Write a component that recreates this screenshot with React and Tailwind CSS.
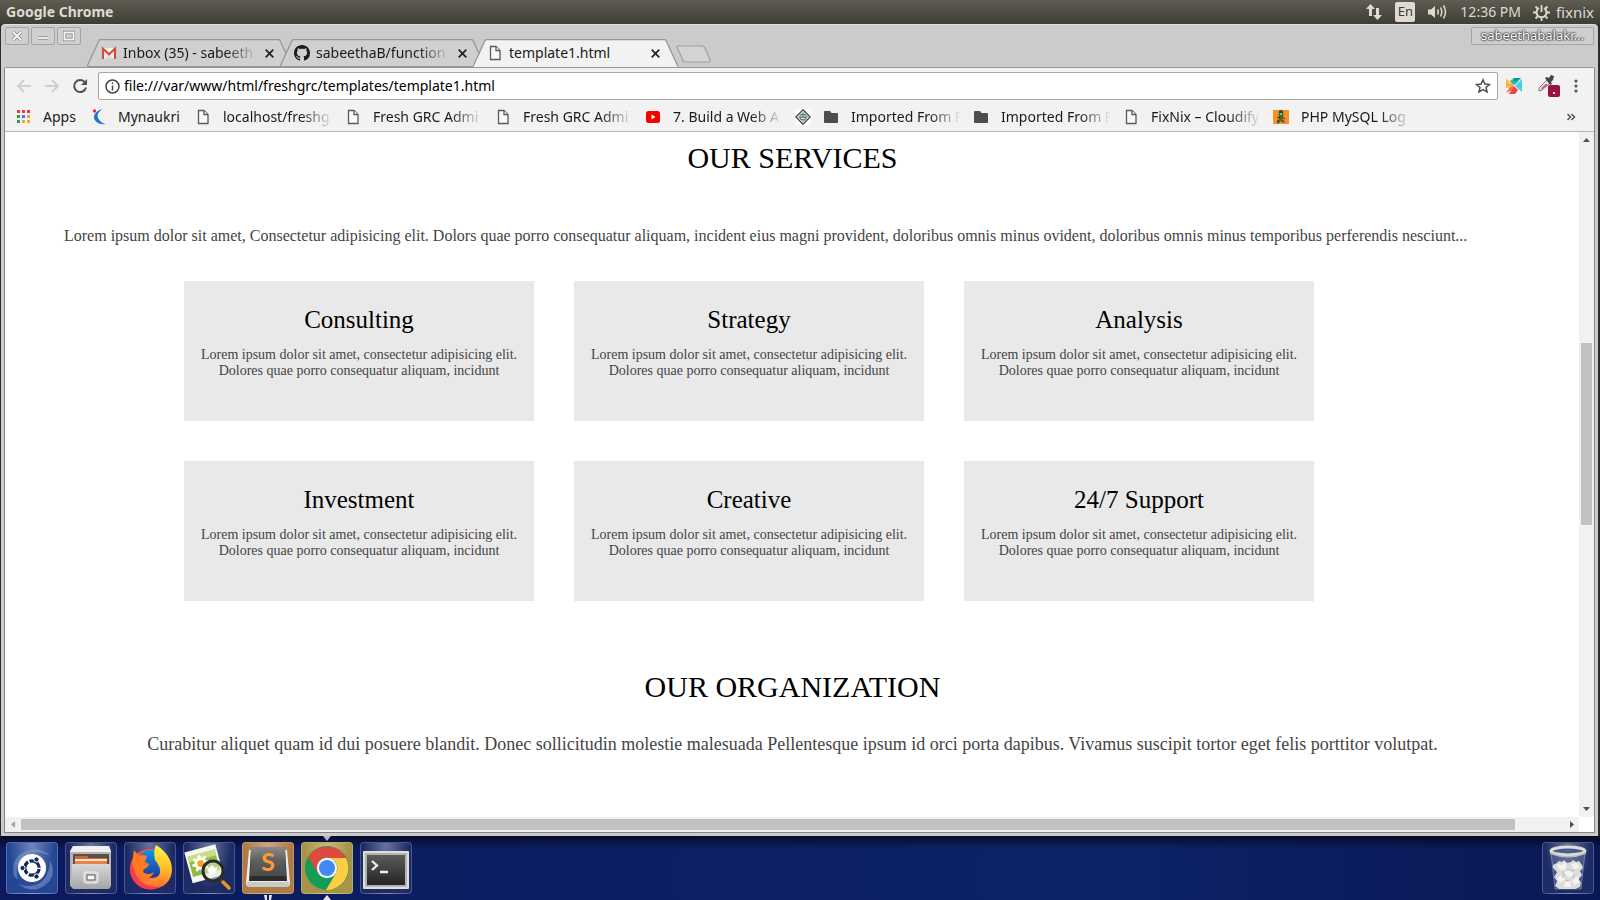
const UI = "font-['Noto_Sans','Open_Sans',sans-serif]";

function TabShape({ active }) {
  return (
    <svg className="absolute inset-0 h-full w-full" viewBox="0 0 205 28" preserveAspectRatio="none" aria-hidden="true">
      <path d="M0 28 L12 1.500 Q12.500 .5 14 .5 H191 Q192.500 .5 193 1.500 L205 28 Z" fill={active ? "#f2f2f2" : "#d0d0d0"} />
      <path d="M0 27.500 L12 1.500 Q12.500 .5 14 .5 H191 Q192.500 .5 193 1.500 L205 27.500" fill="none" stroke="#979797" strokeWidth="1.300" />
      {!active && <path d="M0 27.500H205" stroke="#979797" />}
    </svg>
  );
}

function PageIcon() {
  return (
    <svg width="16" height="16" viewBox="0 0 16 16" fill="#fafafa" stroke="#5a5a5a" strokeWidth="1.300" aria-hidden="true">
      <path d="M3.500 1.500H9L13 5.500V14.500H3.500Z" />
      <path d="M9 1.500V5.500H13" />
    </svg>
  );
}

function FolderIcon() {
  return (
    <svg width="16" height="16" viewBox="0 0 16 16" fill="#4d4d4d" aria-hidden="true">
      <path d="M2 2H7L8.500 4H14Q15 4 15 5V13Q15 14 14 14H2Q1 14 1 13V3Q1 2 2 2Z" />
    </svg>
  );
}

function GmailIcon() {
  return (
    <svg width="16" height="16" viewBox="0 0 16 16" aria-hidden="true">
      <path d="M1.500 3H14.500V14H1.500Z" fill="#f3f1f0" />
      <path d="M3 14 8 9.500 13 14Z" fill="#dedcdb" />
      <path d="M2 14V3.800L8 9.300 14 3.800V14" fill="none" stroke="#d54b3d" strokeWidth="2.200" />
    </svg>
  );
}

function GithubIcon() {
  return (
    <svg width="16" height="16" viewBox="0 0 16 16" fill="#1b1b1b" aria-hidden="true">
      <path d="M8 0C3.580 0 0 3.580 0 8c0 3.540 2.290 6.530 5.470 7.590.4.070.55-.17.55-.38 0-.19-.01-.82-.01-1.490-2.010.37-2.530-.49-2.690-.94-.09-.23-.48-.94-.82-1.130-.28-.15-.68-.52-.01-.53.63-.01 1.080.58 1.230.82.72 1.210 1.870.87 2.330.66.070-.52.28-.87.51-1.070-1.780-.2-3.640-.89-3.640-3.950 0-.87.31-1.590.82-2.150-.08-.2-.36-1.020.08-2.120 0 0 .67-.21 2.200.82.64-.18 1.320-.27 2-.27s1.360.09 2 .27c1.530-1.040 2.200-.82 2.200-.82.44 1.100.16 1.920.08 2.120.51.56.82 1.270.82 2.150 0 3.070-1.870 3.750-3.650 3.950.29.25.54.73.54 1.480 0 1.070-.01 1.930-.01 2.200 0 .21.15.46.55.38A8.010 8.010 0 0 0 16 8c0-4.420-3.580-8-8-8z" />
    </svg>
  );
}

function AppsIcon() {
  const colors = ["#f0363a", "#f0363a", "#f0363a", "#2ba24c", "#2f86f4", "#fba51c", "#2ba24c", "#fba51c", "#fba51c"];
  return (
    <svg width="16" height="16" viewBox="0 0 16 16" aria-hidden="true">
      {colors.map((c, i) => (
        <rect key={i} x={2 + (i % 3) * 5} y={1 + Math.floor(i / 3) * 5} width="3" height="3" fill={c} />
      ))}
    </svg>
  );
}

function NaukriIcon() {
  return (
    <svg width="16" height="16" viewBox="0 0 16 16" aria-hidden="true">
      <path d="M12.500 .5C5.500 3.500 5.500 11 15.500 15.500 7 15.500 3.500 11 4 7.500 4.500 4 7.500 1 12.500 .5Z" fill="#1b77c5" />
      <circle cx="4.500" cy="2" r="1.700" fill="#ee2233" />
    </svg>
  );
}

function YoutubeIcon() {
  return (
    <svg width="16" height="16" viewBox="0 0 16 16" aria-hidden="true">
      <rect x="1" y="2" width="14" height="12" rx="2.500" fill="#f80000" />
      <path d="M6.500 5.500 10.500 8 6.500 10.500Z" fill="#fff" />
    </svg>
  );
}

function DiamondIcon() {
  return (
    <svg width="16" height="16" viewBox="0 0 16 16" aria-hidden="true">
      <rect width="16" height="16" fill="#fcfcfc" />
      <path d="M8 .8 15.200 8 8 15.200.8 8Z" fill="#eee" stroke="#444" strokeWidth="1.300" />
      <path d="M8 3.500 12.500 8 8 12.500 3.500 8Z" fill="none" stroke="#666" strokeDasharray="1.500 1" />
      <circle cx="8" cy="8" r="3.500" fill="#5f8a72" />
      <path d="M5.500 7H7.500M8.500 7H10.500M6 9.500H10" stroke="#e3eee6" />
    </svg>
  );
}

function PhpIcon() {
  return (
    <svg width="16" height="16" viewBox="0 0 16 16" aria-hidden="true">
      <rect y="1" width="16" height="14" fill="#fb902b" />
      <path d="M6 2Q8-.5 10 2L10.500 6 9.500 10 12 13 10 14 8 12 5 15 3.500 13 6 10 5.500 6Z" fill="#496b31" />
      <path d="M6 3H10M4 9 7 8M9 8 12 10M4 12H6" stroke="#252d16" />
      <circle cx="8" cy="5" r="1" fill="#b2d276" />
    </svg>
  );
}

const bookmarks = [
  { label: "Apps", icon: AppsIcon, width: "w-[35px]" },
  { label: "Mynaukri", icon: NaukriIcon, width: "w-[65px]" },
  { label: "localhost/freshg", icon: PageIcon },
  { label: "Fresh GRC Admi", icon: PageIcon },
  { label: "Fresh GRC Admi", icon: PageIcon },
  { label: "7. Build a Web A", icon: YoutubeIcon },
  { label: "", icon: DiamondIcon },
  { label: "Imported From F", icon: FolderIcon },
  { label: "Imported From F", icon: FolderIcon },
  { label: "FixNix – Cloudify", icon: PageIcon },
  { label: "PHP MySQL Log", icon: PhpIcon },
];

const tabs = [
  { label: "Inbox (35) - sabeeth", icon: GmailIcon },
  { label: "sabeethaB/function", icon: GithubIcon },
  { label: "template1.html", icon: PageIcon, active: true },
];

const services = ["Consulting", "Strategy", "Analysis", "Investment", "Creative", "24/7 Support"];

const FADE = "[mask-image:linear-gradient(to_right,black_calc(100%-32px),transparent)]";

function Panel() {
  return (
    <header className="flex h-6 shrink-0 items-center bg-linear-to-b from-[#5f5c50] to-[#3d3c37] px-1.5 text-[15px] text-[#dfdbd2]">
      <span className="flex-1 text-sm font-bold">Google Chrome</span>
      <div className="flex items-center">
        <svg className="mr-3" width="18" height="18" viewBox="0 0 18 18" fill="#dfdbd2" aria-label="Network">
          <path d="M5.500 1 10 6H7V13H4V6H1ZM12.500 17 8 12H11V5H14V12H17Z" />
        </svg>
        <span className="mr-3 flex h-5 w-5 items-center justify-center rounded-xs bg-[#dfdbd2] text-[13px] text-[#3d3c37]">En</span>
        <svg className="mr-3" width="21" height="18" viewBox="0 0 21 18" fill="none" stroke="#dfdbd2" strokeWidth="1.500" aria-label="Volume">
          <path d="M1 6.500H4L8 3V15L4 11.500H1Z" fill="#dfdbd2" stroke="none" />
          <path d="M10.500 6.500Q12 9 10.500 11.500M13.500 4.500Q16 9 13.500 13.500M16.500 2.500Q20.500 9 16.500 15.500" />
        </svg>
        <span className="mr-3 text-sm">12:36 PM</span>
        <svg className="mr-1.5" width="17" height="17" viewBox="0 0 17 17" fill="none" stroke="#dfdbd2" aria-label="Session">
          <path d="M6 4A5 5 0 1 0 11 4" strokeWidth="2" />
          <path d="M8.500 1V8M8.500 14V17M0 8.500H3M14 8.500H17M2.500 2.500 4.500 4.500M14.500 2.500 12.500 4.500M2.500 14.500 4.500 12.500M14.500 14.500 12.500 12.500" strokeWidth="1.800" />
        </svg>
        <span>fixnix</span>
      </div>
    </header>
  );
}

function WindowButton({ label, children }) {
  return (
    <button aria-label={label} className="flex h-[18px] w-6 items-center justify-center rounded-xs border border-[#a5a5a5] bg-[#cfcfcf]">
      <svg width="12" height="12" viewBox="0 0 12 12" fill="none" aria-hidden="true">
        <g stroke="#8c8c8c" strokeWidth="3.500">{children}</g>
        <g stroke="#f4f4f4" strokeWidth="1.800">{children}</g>
      </svg>
    </button>
  );
}

function TabStrip() {
  return (
    <div className="flex h-[43px] shrink-0 items-start justify-between border-t border-[#dedede] bg-[#cbcbcb]">
      <div className="flex items-end">
        <div className="flex gap-0.5 self-start pt-0.5">
          <WindowButton label="Close"><path d="M2 2 10 10M10 2 2 10" /></WindowButton>
          <WindowButton label="Minimize"><path d="M1 8H11" /></WindowButton>
          <WindowButton label="Maximize"><rect x="1.500" y="2.500" width="9" height="7" /></WindowButton>
        </div>
        <div className="ml-1.5 flex pt-[14px]" role="tablist">
          {tabs.map(({ label, icon: Icon, active }) => (
            <div key={label} className={`relative -mr-3 flex h-7 w-[205px] items-center pr-4 pl-[14px] ${active ? "z-10" : ""}`}>
              <TabShape active={active} />
              <div className="relative flex min-w-0 flex-1 items-center">
                <Icon />
                <button role="tab" aria-selected={!!active} className={`ml-1.5 min-w-0 flex-1 overflow-hidden text-left text-sm whitespace-nowrap text-[#1a1a1a] ${active ? "" : FADE}`}>{label}</button>
                <button aria-label={`Close ${label}`} className="ml-1.5 p-0.5">
                  <svg width="9" height="9" viewBox="0 0 9 9" stroke="#222" strokeWidth="1.700" aria-hidden="true"><path d="M.7.7 8.300 8.300M8.300.7.7 8.300" /></svg>
                </button>
              </div>
            </div>
          ))}
        </div>
        <button aria-label="New tab" className="mb-1 ml-2.5">
          <svg width="36" height="18" viewBox="0 0 36 18" aria-hidden="true">
            <path d="M2 1H26Q28 1 29 3L34 15Q34.500 17 33 17H9Q7.500 17 7 15.500L1.200 2.500Q1 1 2 1Z" fill="#d3d3d3" stroke="#a0a0a0" strokeWidth="1.200" />
          </svg>
        </button>
      </div>
      <button className="mt-0.5 flex h-[18px] w-[123px] items-center justify-center rounded-xs border border-[#a5a5a5] bg-[#cfcfcf] text-[13px] text-white [text-shadow:0_0_2px_#222,0_0_2px_#222,0_0_1px_#333]">
        sabeethabalakr...
      </button>
    </div>
  );
}

function Toolbar() {
  return (
    <div className="flex h-[33px] shrink-0 items-center border-t border-[#979797] bg-[#f2f2f2] pt-1">
      <button aria-label="Back" className="ml-2.5">
        <svg width="17" height="16" viewBox="0 0 17 16" fill="none" stroke="#cfcfcf" strokeWidth="2" aria-hidden="true"><path d="M16 8H3M9 2 3 8 9 14" /></svg>
      </button>
      <button aria-label="Forward" className="ml-3">
        <svg width="17" height="16" viewBox="0 0 17 16" fill="none" stroke="#cfcfcf" strokeWidth="2" aria-hidden="true"><path d="M1 8H14M8 2 14 8 8 14" /></svg>
      </button>
      <button aria-label="Reload" className="ml-[11px]">
        <svg width="16" height="16" viewBox="0 0 16 16" fill="none" aria-hidden="true">
          <path d="M13 4.500A6 6 0 1 0 14 9.500" stroke="#505050" strokeWidth="2" />
          <path d="M15 1V7H9Z" fill="#505050" />
        </svg>
      </button>
      <label className="ml-2.5 flex h-7 min-w-0 flex-1 items-center rounded-xs border border-[#a6a6a6] bg-white px-1.5">
        <svg width="15" height="15" viewBox="0 0 15 15" fill="none" stroke="#444" strokeWidth="1.500" aria-hidden="true">
          <circle cx="7.500" cy="7.500" r="6.500" /><path d="M7.500 6.500V11.500M7.500 3.500V5" />
        </svg>
        <input aria-label="Address" defaultValue="file:///var/www/html/freshgrc/templates/template1.html" className="ml-1 min-w-0 flex-1 bg-transparent text-sm text-black outline-none" />
        <svg width="16" height="16" viewBox="0 0 16 16" fill="none" stroke="#505050" strokeWidth="1.500" aria-hidden="true">
          <path d="M8 1.800 9.900 6.100 14.500 6.500 11 9.500 12.100 14 8 11.600 3.900 14 5 9.500 1.500 6.500 6.100 6.100Z" />
        </svg>
      </label>
      <button aria-label="Extension" className="ml-2">
        <svg width="16" height="16" viewBox="0 0 16 16" aria-hidden="true">
          <path d="M0 1 7 5 8 8 0 10Z" fill="#fcae45" />
          <path d="M0 1 7 5 3 6Z" fill="#ffd34f" />
          <path d="M4 3 8 0H15L11 5 8 7Z" fill="#1fbab5" />
          <path d="M8 0H15L8 4Z" fill="#11908f" />
          <path d="M16 1V14L9 8 12 5Z" fill="#4bd1e4" />
          <path d="M8 8 12 12 9 16H3L6 11Z" fill="#ee4549" />
          <path d="M0 15 4 9 8 8 6 12Z" fill="#f46a4e" />
        </svg>
      </button>
      <button aria-label="Color picker" className="ml-4">
        <svg width="22" height="22" viewBox="0 0 22 22" aria-hidden="true">
          <path d="M1 13 9 5 12 8 4 15 1 16Z" fill="#eee" stroke="#777" />
          <path d="M3 13 8 8.500 10 10 4 14.500Z" fill="#e35a90" />
          <path d="M7 3 9 2 11 3 13 0 16 1 15 5 13 7 14 9 12 10Z" fill="#444" />
          <rect x="10" y="10" width="12" height="12" rx="2" fill="#99123f" />
          <rect x="15" y="17" width="2" height="2" fill="#f5d8e0" />
        </svg>
      </button>
      <button aria-label="Menu" className="mr-4 ml-3.5">
        <svg width="4" height="14" viewBox="0 0 4 14" fill="#555" aria-hidden="true"><circle cx="2" cy="2" r="1.600" /><circle cx="2" cy="7" r="1.600" /><circle cx="2" cy="12" r="1.600" /></svg>
      </button>
    </div>
  );
}

function Bookmarks() {
  return (
    <nav className="flex h-8 shrink-0 items-center gap-3 overflow-hidden border-b border-[#b6b6b6] bg-[#f2f2f2] pt-0.5 pr-[18px] pl-2.5 text-sm text-[#1a1a1a]">
      {bookmarks.map(({ label, icon: Icon, width }, i) => (
        <a key={i} href="#" className="flex shrink-0 items-center gap-3" aria-label={label || "Bookmark"}>
          <Icon />
          {label && <span className={`whitespace-nowrap ${width || `w-[110px] overflow-hidden ${FADE}`}`}>{label}</span>}
        </a>
      ))}
      <button aria-label="More bookmarks" className="ml-auto">
        <svg width="9" height="8" viewBox="0 0 9 8" fill="none" stroke="#555" strokeWidth="1.500" aria-hidden="true"><path d="M.5 1 3.500 4 .5 7M4.500 1 7.500 4 4.500 7" /></svg>
      </button>
    </nav>
  );
}

function Arrow({ d, color = "#505050" }) {
  return <svg width="15" height="15" viewBox="0 0 15 15" fill={color} aria-hidden="true"><path d={d} /></svg>;
}

function Content() {
  return (
    <div className="grid min-h-0 flex-1 grid-cols-[minmax(0,1fr)_15px] grid-rows-[minmax(0,1fr)_15px] bg-white">
      <main className="overflow-hidden pl-px font-['Liberation_Serif',serif] text-[#444]">
        <section>
          <h2 className="pt-[9px] text-center text-[30px] leading-[34px] text-black">OUR SERVICES</h2>
          <p className="mt-[52px] pl-[58px] text-base leading-[18px] whitespace-nowrap">
            Lorem ipsum dolor sit amet, Consectetur adipisicing elit. Dolors quae porro consequatur aliquam, incident eius magni provident, doloribus omnis minus ovident, doloribus omnis minus temporibus perferendis nesciunt...
          </p>
          <div className="mt-9 grid grid-cols-3 gap-10 pr-[265px] pl-[178px]">
            {services.map((name) => (
              <article key={name} className="h-[140px] bg-[#e9e9e9] px-2.5 pt-[25px] text-center">
                <h3 className="text-[25px] leading-7 text-black">{name}</h3>
                <p className="mt-[13px] text-sm leading-4">
                  Lorem ipsum dolor sit amet, consectetur adipisicing elit. Dolores quae porro consequatur aliquam, incidunt
                </p>
              </article>
            ))}
          </div>
        </section>
        <section className="text-center">
          <h2 className="mt-[69px] text-[30px] leading-[34px] text-black">OUR ORGANIZATION</h2>
          <p className="mt-[30px] text-lg leading-5">
            Curabitur aliquet quam id dui posuere blandit. Donec sollicitudin molestie malesuada Pellentesque ipsum id orci porta dapibus. Vivamus suscipit tortor eget felis porttitor volutpat.
          </p>
        </section>
      </main>
      <div className="flex flex-col bg-[#f1f1f1]">
        <Arrow d="M4 10H11L7.500 6Z" />
        <div className="flex-[196]" />
        <div className="mx-0.5 flex-[182] bg-[#c1c1c1]" />
        <div className="flex-[277]" />
        <Arrow d="M4 5H11L7.500 9Z" />
      </div>
      <div className="flex bg-[#f1f1f1]">
        <Arrow d="M10 4V11L6 7.500Z" color="#a3a3a3" />
        <div className="my-0.5 ml-px flex-[1494] bg-[#c1c1c1]" />
        <div className="flex-[49]" />
        <Arrow d="M6 4V11L10 7.500Z" />
      </div>
    </div>
  );
}

function UbuntuLogo() {
  return (
    <>
      <path d="M8 34Q4 16 20 9 34 4 44 14 26 5 16 17 8 26 12 38ZM44 18Q52 34 38 44 26 52 12 42 30 48 39 36 44 28 44 18Z" fill="#8ba3d6" opacity=".5" />
      <circle cx="26" cy="26" r="14" fill="#fff" />
      <circle cx="26" cy="26" r="7.200" fill="none" stroke="#14275d" strokeWidth="3.200" strokeDasharray="13.500 1.600" strokeDashoffset="-1" />
      <g fill="#14275d" stroke="#fff"><circle cx="16.500" cy="26" r="2.600" /><circle cx="30.500" cy="17.500" r="2.600" /><circle cx="30.500" cy="34.500" r="2.600" /></g>
    </>
  );
}

function FilesLogo() {
  return (
    <>
      <path d="M8 4H44L46 9V43Q46 46 43 46H9Q6 46 5 43V9Z" fill="#b5b5b5" />
      <path d="M8 4H44L46 10H5Z" fill="#f0f0f0" />
      <rect x="8" y="12" width="36" height="12" fill="#5a504a" />
      <path d="M10 14H22L24 16H42V24H10Z" fill="#d9632c" />
      <path d="M10 17H42V24H10Z" fill="#f7e6d6" /><path d="M10 19H42V24H10Z" fill="#e68542" />
      <path d="M7 22H45V45Q45 47 43 47H9Q7 47 7 45Z" fill="url(#metal)" />
      <rect x="19" y="30" width="14" height="11" rx="2" fill="#d4d4d4" stroke="#eee" />
      <rect x="22" y="33" width="8" height="5" fill="#f8f8f8" stroke="#555" />
    </>
  );
}

function FirefoxLogo() {
  return (
    <>
      <circle cx="26" cy="27" r="20" fill="url(#fox)" />
      <circle cx="27" cy="22" r="14" fill="url(#globe)" />
      <path d="M8 22 10 8 15 14Q19 12 23 14L21 20 25 22Q24 26 20 27L19 30Q24 34 30 30 27 38 18 37 9 33 8 22Z" fill="#ff7a22" />
      <path d="M32 3Q48 13 48 28 47 44 30 47 18 48 12 41 31 46 36 31 37 25 31 18 29 9 32 3Z" fill="url(#flame)" />
      <path d="M8 21Q3 38 18 46 28 50 36 45 14 45 10 27Z" fill="#f52f58" opacity=".75" />
    </>
  );
}

function ViewerLogo() {
  return (
    <>
      <g transform="rotate(-15 20 22)">
        <rect x="5" y="6" width="32" height="32" fill="#f8f8f3" />
        <rect x="7" y="11" width="28" height="21" fill="#91bb42" />
        <path d="M7 11H35V17H7Z" fill="#cbdc85" />
        {[0, 45, 90, 135].map((a) => <ellipse key={a} cx="18" cy="21" rx="9" ry="2.600" fill="#fff" transform={`rotate(${a} 18 21)`} />)}
        <circle cx="18" cy="21" r="3.500" fill="#f2a51d" />
      </g>
      <circle cx="30" cy="29" r="10" fill="#dfe6cd" fillOpacity=".5" stroke="#292929" strokeWidth="3" />
      <path d="M24 28 29 23 32 26 35 25 32 31 28 33Z" fill="#fff" />
      <path d="M37 37 46 46" stroke="#333" strokeWidth="5" strokeLinecap="round" /><path d="M40 40 46 46" stroke="#df9436" strokeWidth="3.500" strokeLinecap="round" />
    </>
  );
}

function SublimeLogo() {
  return (
    <>
      <path d="M7 8H45L48 41Q48 45 44 45H8Q4 45 4 41Z" fill="#ecece9" />
      <path d="M5 40H47V42Q47 45 44 45H8Q5 45 5 42Z" fill="#c9c9c5" />
      <path d="M11 5H41Q43 5 43 7L45 39H7L9 7Q9 5 11 5Z" fill="#2c2c2c" />
      <path d="M11 5H41Q43 5 43 7L44 34H8L9 7Q9 5 11 5Z" fill="url(#keycap)" />
      <text x="26" y="29" textAnchor="middle" className="font-['Lato',sans-serif] text-[25px] font-bold" fill="#ff9a31">S</text>
    </>
  );
}

function ChromeLogo() {
  return (
    <>
      <circle cx="26" cy="26" r="22" fill="#129e59" />
      <path d="M6.900 15A22 22 0 0 1 45.100 16H26A10 10 0 0 0 17 21L16.500 31Z" fill="#dc4b3e" />
      <path d="M45 16A22 22 0 0 1 25 48L35 31A10 10 0 0 0 31 17L26 16Z" fill="#ffcd42" />
      <circle cx="26" cy="26" r="10.200" fill="#f5f5f5" /><circle cx="26" cy="26" r="8" fill="#4387f5" />
    </>
  );
}

function TerminalLogo() {
  return (
    <>
      <rect x="3" y="9" width="46" height="38" rx="1" fill="#dededc" /><rect x="5" y="11" width="42" height="34" fill="#b2b2af" />
      <rect x="7" y="13" width="38" height="30" fill="url(#dark)" />
      <path d="M12 19 17 23.500 12 28M20 30H28" fill="none" stroke="#f1f1ed" strokeWidth="2.300" />
    </>
  );
}

function TrashLogo() {
  return (
    <>
      <path d="M9 10H43L39 47H13Z" fill="#a7b2d0" fillOpacity=".2" stroke="#b5bed5" strokeOpacity=".5" />
      <path d="M11 23 15 21 17 19 20 20 22 18 25 21 29 20 31 18 34 20 37 19 40 23 41 26 38 29 40 33 37 37 39 41 38 45 33 47H17L13 44 15 39 12 35 15 30 11 26Z" fill="#dcdcda" />
      <path d="M15 22 20 23 23 20 25 26 20 29 16 26ZM29 22 34 21 38 25 33 28ZM22 30 28 28 32 32 27 36ZM15 36 20 33 23 38 18 41ZM30 38 36 34 37 41 32 43ZM23 40 28 39 29 45 22 45Z" fill="#f3f3f1" />
      <path d="M25 26 29 29 33 28M20 29 22 33 20 36M32 32 31 37M23 38 27 39" fill="none" stroke="#bcbcba" />
      <ellipse cx="26" cy="9" rx="17" ry="4" fill="#4d5a8d" stroke="#deded8" strokeWidth="3" />
      <path d="M8 10Q26 18 44 10V12Q26 19 8 12Z" fill="#babab4" />
    </>
  );
}

const launchers = [
  { name: "Dash", logo: UbuntuLogo, tint: "bg-[#254694]" },
  { name: "Files", logo: FilesLogo, tint: "bg-[#1d2c67]" },
  { name: "Firefox", logo: FirefoxLogo, tint: "bg-[#1d2c67]" },
  { name: "Image Viewer", logo: ViewerLogo, tint: "bg-[#1d2c67]" },
  { name: "Sublime Text", logo: SublimeLogo, tint: "bg-[#b07a45]", pips: true },
  { name: "Google Chrome", logo: ChromeLogo, tint: "bg-[#a89446]", focused: true },
  { name: "Terminal", logo: TerminalLogo, tint: "bg-[#1d2c67]" },
];

function Launcher({ name, logo: Logo, tint, pips, focused }) {
  return (
    <button aria-label={name} className={`relative block h-[52px] w-[52px] shrink-0 rounded-sm ${tint}`}>
      <span className="absolute inset-0 rounded-sm border border-white/20 bg-radial-[at_50%_0%] from-white/35 to-transparent to-65%" />
      <svg className="relative" width="52" height="52" viewBox="0 0 52 52" aria-hidden="true"><Logo /></svg>
      {focused && (
        <>
          <svg className="absolute -top-[6px] left-[22px]" width="8" height="5" viewBox="0 0 8 5" fill="#b5b7bd" aria-hidden="true"><path d="M0 0H8L4 5Z" /></svg>
          <svg className="absolute -bottom-[6px] left-[22px]" width="8" height="5" viewBox="0 0 8 5" fill="#e3e3e3" aria-hidden="true"><path d="M0 5H8L4 0Z" /></svg>
        </>
      )}
      {pips && (
        <svg className="absolute -bottom-[6px] left-[22px]" width="8" height="5" viewBox="0 0 8 5" fill="#e3e3e3" aria-hidden="true"><path d="M0 0H3V5H1ZM8 0H5V5H7Z" /></svg>
      )}
    </button>
  );
}

function Dock() {
  return (
    <footer className="shrink-0 bg-linear-to-r from-[#0b1a5e] via-[#0d2268] via-70% to-[#0a1755]">
      <div className="flex h-16 items-center gap-[7px] bg-linear-to-b from-black/60 to-transparent to-20% px-1.5">
        <svg width="0" height="0" className="absolute" aria-hidden="true">
          <defs>
            <linearGradient id="metal" x2="0" y2="1"><stop stopColor="#d8d8d8" /><stop offset="1" stopColor="#a5a5a5" /></linearGradient>
            <linearGradient id="dark" x2="0" y2="1"><stop stopColor="#5c5c5c" /><stop offset="1" stopColor="#242424" /></linearGradient>
            <linearGradient id="keycap" x2="0" y2="1"><stop stopColor="#8a8a8a" /><stop offset=".45" stopColor="#606060" /><stop offset="1" stopColor="#4a4a4a" /></linearGradient>
            <linearGradient id="fox" x2="1" y2="1"><stop stopColor="#ff3d4b" /><stop offset="1" stopColor="#ffa524" /></linearGradient>
            <linearGradient id="globe" x2="0" y2="1"><stop stopColor="#0995ef" /><stop offset="1" stopColor="#24359a" /></linearGradient>
            <linearGradient id="flame" x2="0" y2="1"><stop stopColor="#fff34d" /><stop offset=".55" stopColor="#ffbd26" /><stop offset="1" stopColor="#ff6330" /></linearGradient>
          </defs>
        </svg>
        {launchers.map((item) => <Launcher key={item.name} {...item} />)}
        <div className="ml-auto"><Launcher name="Trash" logo={TrashLogo} tint="bg-[#1d2c67]" /></div>
      </div>
    </footer>
  );
}

export default function App() {
  return (
    <div className={`flex h-screen flex-col overflow-hidden bg-[#2c2c2c] ${UI}`}>
      <Panel />
      <div className="mr-0.5 ml-px flex min-h-0 flex-1 flex-col rounded-t-sm border-x-4 border-b-4 border-[#cbcbcb] bg-[#cbcbcb]">
        <TabStrip />
        <div className="flex min-h-0 flex-1 flex-col shadow-[-1px_1px_0_#858585,1px_1px_0_#858585]">
          <Toolbar />
          <Bookmarks />
          <Content />
        </div>
      </div>
      <Dock />
    </div>
  );
}
